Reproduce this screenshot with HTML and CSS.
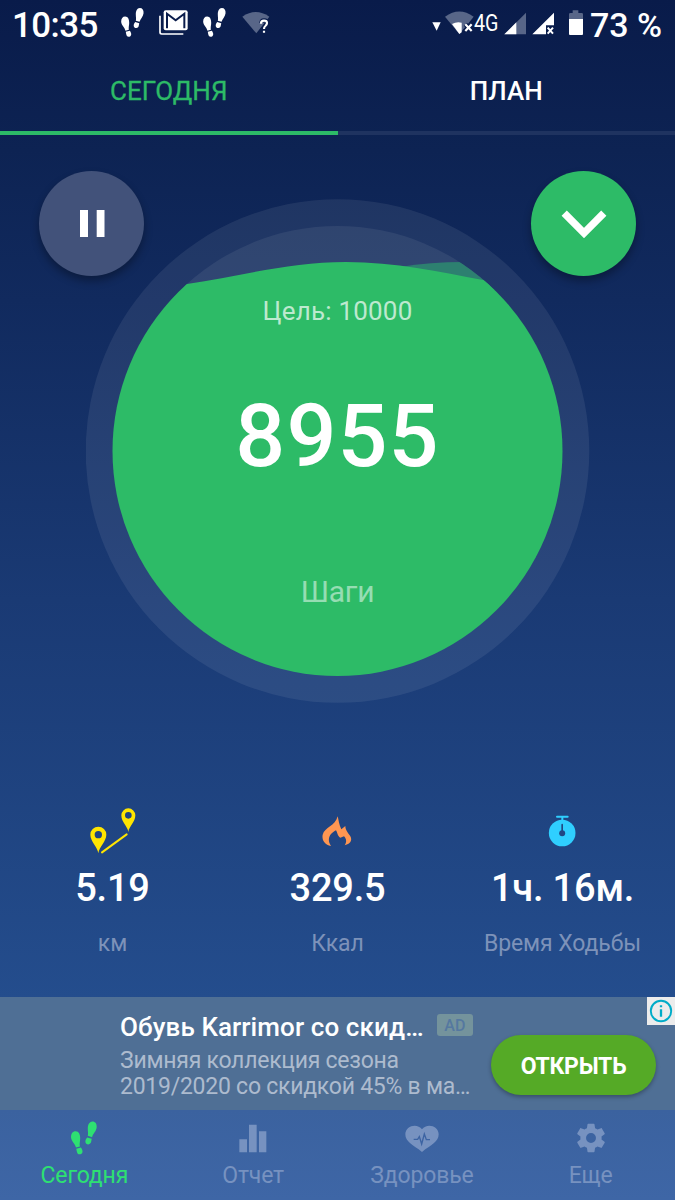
FILE: index.html
```html
<!DOCTYPE html>
<html lang="ru">
<head>
<meta charset="utf-8">
<title>Шагомер</title>
<link rel="stylesheet" href="styles.css">
</head>
<body>
<svg class="defs" width="0" height="0">
  <symbol id="feet" viewBox="216 423 79 101">
    <path d="M216 471C216 460 221 453 230 453C240 453 244 463 244 474C244 484 241 490 243 499L231 502C228 490 217 484 216 471ZM232 506L246 502C252 509 254 520 244 523C234 525 234 514 232 506Z"/>
    <path d="M294 441C295 430 290 423 281 423C271 424 267 433 267 445C267 455 269 460 267 467L280 471C283 460 293 453 294 441ZM265 472L279 476C277 485 278 491 269 493C258 493 257 481 265 472Z"/>
  </symbol>
</svg>
<div class="screen">
  <header class="status">
    <span class="clock">10:35</span>
    <svg class="s-feet" width="23" height="29"><use href="#feet"/></svg>
    <svg class="s-mail" width="29" height="26" viewBox="476 29 87 78">
      <path d="M479 46V96Q479 101 484 101H549" fill="none" stroke="#fff" stroke-width="5"/>
      <rect x="490" y="30" width="72" height="60" rx="6" fill="#fff"/>
      <path d="M500 84V40L526 60L552 40V84" fill="none" stroke="#0a1c4b" stroke-width="6"/>
    </svg>
    <svg class="s-feet2" width="23" height="29"><use href="#feet"/></svg>
    <svg class="s-wifi" width="28" height="24" viewBox="725 33 84 72">
      <path d="M726 50Q766 22 807 50L768 100Z" fill="#586688"/>
      <path d="M783 69Q783 61 791 61Q800 61 800 69Q800 74 795 78Q791 81 791 87" fill="none" stroke="#0a1c4b" stroke-width="12"/>
      <path d="M782 71Q782 62 791 62Q800 62 800 69Q800 74 795 78Q791 81 791 87M791 92V98" fill="none" stroke="#fff" stroke-width="6.500"/>
    </svg>
    <svg class="s-net" width="90" height="30" viewBox="22 20 270 90">
      <path d="M23 66H48L36 91Z" fill="#fff"/>
      <path d="M61 49Q104 18 147 49L132 68L104 101Z" fill="#586688"/>
      <path d="M82 71Q96 63 111 67V96L104 101Z" fill="#fff"/>
      <path d="M122 72L141 92M141 72L122 92" stroke="#0a1c4b" stroke-width="13"/>
      <path d="M122 72L141 92M141 72L122 92" stroke="#fff" stroke-width="6.500"/>
    </svg>
    <span class="lte">4G</span>
    <svg class="s-signal" width="84" height="30" viewBox="234 20 252 90">
      <path d="M238 102L303 37V102Z" fill="#586688"/>
      <path d="M238 102L274 66V102Z" fill="#fff"/>
      <path d="M322 102L387 37V75H363V102Z" fill="#fff"/>
      <path d="M368 82L384 100M384 82L368 100" stroke="#fff" stroke-width="6"/>
      <path d="M432 58V42Q432 38 436 38H443V30H460V38H470Q474 38 474 42V58Z" fill="#586688"/>
      <path d="M432 56H474V101Q474 104 471 104H435Q432 104 432 101Z" fill="#fff"/>
    </svg>
    <span class="percent">73 %</span>
  </header>

  <nav class="tabs">
    <div class="tab tab-on">СЕГОДНЯ</div>
    <div class="tab">ПЛАН</div>
  </nav>

  <main class="stage">
    <div class="dial">
      <svg class="dial-art" width="504" height="504" viewBox="86 199 504 504">
        <circle cx="337.5" cy="451" r="251.8" fill="#fff" fill-opacity=".075"/>
        <clipPath id="disc"><circle cx="337.5" cy="451" r="225"/></clipPath>
        <g clip-path="url(#disc)">
          <rect x="112" y="226" width="451" height="60" fill="#fff" fill-opacity=".07"/>
          <path d="M400 267Q430 262 464 262L500 266V290H400Z" fill="#2d8070"/>
          <path d="M110 292Q150 290 187 284C240 276 290 262 346 262C395 262 440 272 483 280L565 290V680H110Z" fill="#2dbb67"/>
        </g>
      </svg>
      <div class="dial-text">
        <div class="goal">Цель: 10000</div>
        <div class="count">8955</div>
        <div class="unit">Шаги</div>
      </div>
    </div>
    <div class="controls">
      <button class="round pause"><svg width="26" height="27"><path d="M1 0H9V27H1ZM17.700 0H25.500V27H17.700Z" fill="#fff"/></svg></button>
      <button class="round more"><svg width="46" height="28" viewBox="0 0 46 28"><path d="M3.200 3.200L23 23L42.800 3.200" fill="none" stroke="#fff" stroke-width="7.400"/></svg></button>
    </div>
  </main>

  <section class="stats">
    <div class="stat">
      <svg width="46" height="46" viewBox="89 53 138 138">
        <path fill-rule="evenodd" fill="#ffe500" d="M114 189C112 170 90 153 90 133A24 24 0 0 1 138 133C138 153 116 170 114 189ZM114 122A11 11 0 1 0 114 144A11 11 0 1 0 114 122ZM204 125C202 108 183 96 183 75A21 21 0 0 1 225 75C225 96 206 108 204 125ZM204 65A10 10 0 1 0 204 85A10 10 0 1 0 204 65Z"/>
        <path d="M125 186L199 132" stroke="#ffe500" stroke-width="6" stroke-linecap="round"/>
      </svg>
      <div class="value">5.19</div><div class="label">км</div>
    </div>
    <div class="stat">
      <svg class="flame" width="30" height="46" viewBox="785 53 90 138"><path fill="#ff9651" d="M832 78C835 90 836 102 843 117L855 107C855 120 864 128 870 138C877 151 869 161 853 165C860 154 858 145 851 138L840 142C831 137 832 127 827 120C811 128 797 145 812 167C792 163 784 149 787 133C793 110 825 108 832 78Z"/></svg>
      <div class="value">329.5</div><div class="label">Ккал</div>
    </div>
    <div class="stat">
      <svg class="watch" width="28" height="46" viewBox="503 53 84 138">
        <path d="M530 79H562M546 80V92" stroke="#2fcfff" stroke-width="6" stroke-linecap="round"/>
        <circle cx="545.500" cy="128" r="40" fill="#2fcfff"/>
        <path d="M545.500 103V128" stroke="#214783" stroke-width="5" stroke-linecap="round"/><circle cx="545.500" cy="129" r="9" fill="#214783"/>
      </svg>
      <div class="value">1ч. 16м.</div><div class="label">Время Ходьбы</div>
    </div>
  </section>

  <aside class="ad">
    <div class="ad-copy">
      <div class="ad-head"><span class="ad-title">Обувь Karrimor со скид…</span><span class="ad-badge">AD</span></div>
      <div class="ad-text">Зимняя коллекция сезона<br>2019/2020 со скидкой 45% в ма…</div>
    </div>
    <button class="open">ОТКРЫТЬ</button>
    <svg class="info" width="28" height="28" viewBox="0 0 28 28"><rect width="28" height="28" fill="#ececec"/><circle cx="14" cy="14" r="10.200" fill="none" stroke="#00acc8" stroke-width="1.900"/><path d="M14 8.300V10.300M14 12.300V19.700" stroke="#00acc8" stroke-width="2.300"/></svg>
  </aside>

  <nav class="bottom">
    <div class="item item-on"><svg width="26" height="34"><use href="#feet"/></svg><span>Сегодня</span></div>
    <div class="item"><svg width="28" height="34" viewBox="717 421 84 102"><path d="M718 476H741V515H718ZM747 432H770V515H747ZM777 452H799V515H777Z" fill="currentColor"/></svg><span>Отчет</span></div>
    <div class="item"><svg width="34" height="34" viewBox="196 421 102 102"><path d="M247 514C220 492 197 484 197 461C197 435 233 426 247 446C261 426 297 435 297 461C297 484 274 492 247 514Z" fill="currentColor"/><path d="M222 476H234L239 468L246 490L254 460L260 477H271" fill="none" stroke="#3c63a2" stroke-width="4"/></svg><span>Здоровье</span></div>
    <div class="item"><svg width="34" height="34" viewBox="0 0 24 24"><path fill="currentColor" d="M19.430 12.980c.04-.32.07-.64.07-.98s-.03-.66-.07-.98l2.110-1.650c.19-.15.24-.42.12-.64l-2-3.460c-.12-.22-.39-.3-.61-.22l-2.490 1c-.52-.4-1.080-.73-1.690-.98l-.38-2.650A.488.488 0 0 0 14 2h-4c-.25 0-.46.18-.49.42l-.38 2.650c-.61.25-1.170.59-1.690.98l-2.490-1c-.23-.09-.49 0-.61.22l-2 3.460c-.13.22-.07.49.12.64l2.110 1.650c-.04.32-.07.65-.07.98s.03.66.07.98l-2.110 1.650c-.19.15-.24.42-.12.64l2 3.460c.12.22.39.3.61.22l2.490-1c.52.4 1.080.73 1.690.98l.38 2.650c.03.24.24.42.49.42h4c.25 0 .46-.18.49-.42l.38-2.650c.61-.25 1.170-.59 1.690-.98l2.490 1c.23.09.49 0 .61-.22l2-3.460c.12-.22.07-.49-.12-.64zM12 15.500a3.500 3.500 0 1 1 0-7 3.500 3.500 0 0 1 0 7z"/></svg><span>Еще</span></div>
  </nav>
</div>
</body>
</html>
```

FILE: styles.css
```css
* { box-sizing: border-box; }
body { margin: 0; font-family: Roboto, "Noto Sans", sans-serif; color: #fff; }
button { border: 0; padding: 0; font: inherit; color: inherit; }
svg { display: block; flex: none; }
.defs { position: absolute; }
.screen {
  width: 675px; height: 1200px; overflow: hidden;
  display: flex; flex-direction: column;
  background: linear-gradient(#091b4a 0, #0d2353 150px, #112a5e 300px, #1a3a74 600px, #244d8d 1000px);
}
.status { height: 46px; display: flex; align-items: center; padding-left: 12px; fill: #fff; white-space: nowrap; }
.clock { font-size: 35px; font-weight: 500; width: 109px; padding-top: 4px; letter-spacing: -.6px; }
.s-feet { margin-top: -2px; }
.s-mail { margin-left: 15px; margin-top: -1px; }
.s-feet2 { margin-left: 15px; margin-top: -2px; }
.s-wifi { margin-left: 16px; }
.s-net { margin-left: 162px; margin-top: -3px; }
.lte { font-size: 24px; width: 25px; margin-left: -48px; transform: scaleX(.82); transform-origin: left; }
.s-signal { margin-left: 4px; margin-top: -3px; }
.percent { font-size: 34px; font-weight: 500; padding-top: 4px; margin-left: 3px; }

.tabs { height: 89px; display: flex; flex: none; }
.tab {
  flex: 1; height: 89px; display: flex; align-items: center; justify-content: center;
  font-size: 26px; font-weight: 500; border-bottom: 4px solid #1f3360; padding-top: 5px; line-height: 80px;
}
.tab-on { color: #2dbb67; border-color: #2dbb67; font-weight: 400; -webkit-text-stroke: .3px #2dbb67; }

.stage { height: 670px; flex: none; display: grid; justify-items: center; align-items: start; }
.stage > * { grid-area: 1 / 1; }
.dial { display: grid; margin-top: 64px; }
.dial > * { grid-area: 1 / 1; }
.dial-text { display: flex; flex-direction: column; align-items: center; padding-top: 92px; }
.goal { font-size: 26px; line-height: 40px; color: rgba(255,255,255,.7); letter-spacing: .2px; }
.count { font-size: 88px; font-weight: 500; line-height: 100px; margin-top: 55px; letter-spacing: 1.1px; }
.unit { font-size: 30px; line-height: 40px; margin-top: 86px; color: rgba(255,255,255,.5); letter-spacing: -.2px; }
.controls { width: 597px; margin-top: 36px; display: flex; justify-content: space-between; }
.round {
  width: 105px; height: 105px; border-radius: 50%; display: flex; align-items: center; justify-content: center;
  box-shadow: 0 5px 8px rgba(0,0,0,.32);
}
.pause { background: #42527a; }
.more { background: #2dbb67; }

.stats { height: 192px; flex: none; display: grid; grid-template-columns: repeat(3, 1fr); padding-top: 3px; }
.stat { display: flex; flex-direction: column; align-items: center; white-space: nowrap; }
.flame, .watch { margin-right: 2px; }
.value { font-size: 38px; font-weight: 500; line-height: 46px; margin-top: 11px; letter-spacing: -.2px; }
.label { font-size: 23px; line-height: 30px; margin-top: 18px; color: #7d92b9; letter-spacing: -.1px; }

.ad { height: 113px; flex: none; background: #4f6f95; display: flex; position: relative; padding-left: 120px; }
.ad-copy { width: 371px; padding-top: 14px; white-space: nowrap; }
.ad-head { display: flex; align-items: center; height: 32px; }
.ad-title { font-size: 26px; font-weight: 500; width: 317px; letter-spacing: .1px; }
.ad-badge {
  width: 36px; height: 22px; border-radius: 3px; background: #74939c; color: #5578a0; margin-top: -4px;
  font-size: 16px; font-weight: 500; line-height: 23px; text-align: center; letter-spacing: .3px;
}
.ad-text { font-size: 23px; line-height: 26px; margin-top: 5px; color: #adbbce; letter-spacing: -.25px; }
.open {
  width: 165px; height: 60px; margin-top: 38px; border-radius: 30px; background: #55aa26;
  box-shadow: 0 2px 4px rgba(0,0,0,.3); font-size: 23px; font-weight: 700; line-height: 64px; letter-spacing: -.3px;
}
.info { position: absolute; right: 0; top: 0; }

.bottom { height: 90px; flex: none; display: grid; grid-template-columns: repeat(4, 1fr); background: linear-gradient(#3b629f, #3e66a6); }
.item { display: flex; flex-direction: column; align-items: center; padding-top: 11px; color: #7792c0; font-size: 23px; }
.item span { line-height: 30px; margin-top: 6px; letter-spacing: -.15px; }
.item-on { color: #2ee072; fill: currentColor; }
```
